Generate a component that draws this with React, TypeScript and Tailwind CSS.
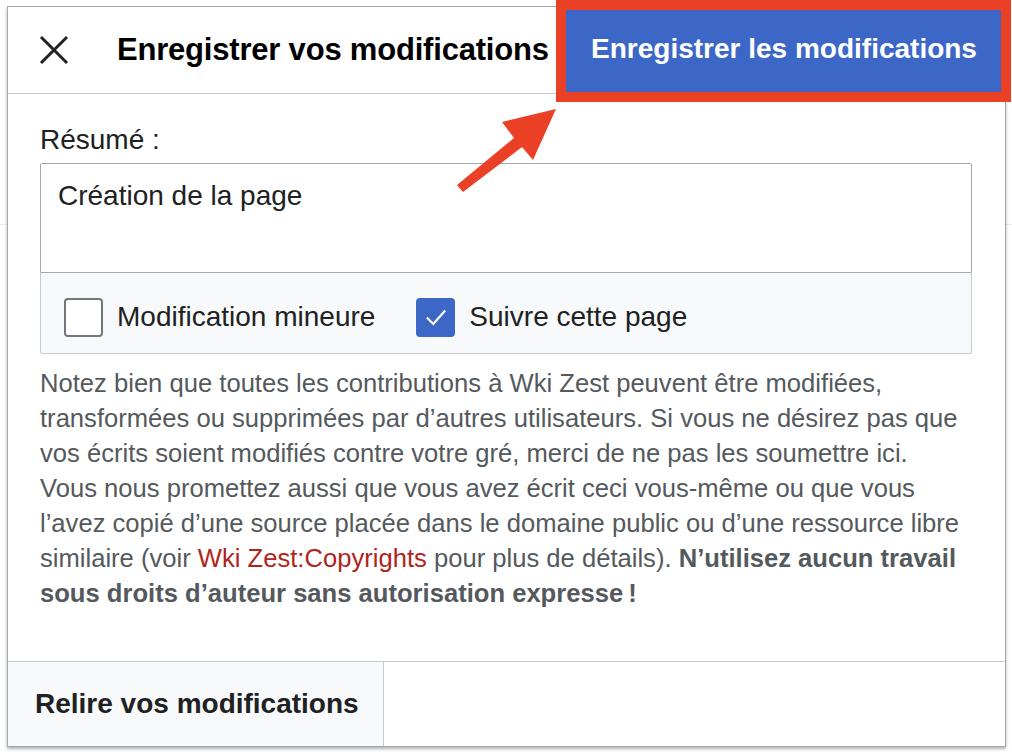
import React from "react";

export default function App() {
  return (
    <div
      className="relative w-[1012px] h-[754px] bg-white overflow-hidden"
      style={{ fontFamily: '"Liberation Sans", Arial, sans-serif' }}
    >
      {/* page behind the dialog */}
      <div className="pt-[224px]">
        <div className="h-px bg-[#e3ebf6]" />
      </div>

      {/* dialog */}
      <div className="absolute left-[7px] top-[6px] w-[999px] h-[741px] bg-white border border-[#a2a9b1] shadow-[0_2px_3px_0_rgba(0,0,0,0.3)] flex flex-col">
        {/* header */}
        <div className="h-[87px] flex items-stretch border-b border-[#c8ccd1] shrink-0">
          <button className="w-[92px] flex items-center justify-center text-[#202122]">
            <svg width="30" height="30" viewBox="0 0 30 30">
              <path d="M2 2 L28 28 M28 2 L2 28" stroke="#202122" strokeWidth="3" fill="none" />
            </svg>
          </button>
          <div className="flex items-center pl-[17px] text-[31px] font-bold text-black tracking-[-0.2px]">
            Enregistrer vos modifications
          </div>
          <div className="flex-1" />
          <button className="w-[442px] bg-[#3d67c6] text-white text-[28px] font-bold flex items-center justify-center pb-[2px]">
            Enregistrer les modifications
          </button>
        </div>

        {/* body */}
        <div className="flex-1 pl-[32px] pr-[33px] pt-[31px]">
          <div className="text-[28px] leading-[30px] text-[#202122]">Résumé :</div>
          <div className="mt-[8px] w-[932px]">
            <div className="h-[110px] border border-[#a2a9b1] rounded-t-[2px] px-[17px] pt-[14px] text-[28px] leading-[36px] text-[#202122]">
              Création de la page
            </div>
            <div className="h-[81px] bg-[#f8f9fa] border border-t-0 border-[#c8ccd1] rounded-b-[3px] flex items-center pl-[23px] pt-[8px]">
              <label className="flex items-center">
                <span className="w-[39px] h-[39px] rounded-[4px] border-2 border-[#72777d] bg-white" />
                <span className="ml-[14px] text-[28px] text-[#202122]">Modification mineure</span>
              </label>
              <label className="flex items-center ml-[41px]">
                <span className="w-[39px] h-[39px] rounded-[4px] bg-[#3d67c6] flex items-center justify-center">
                  <svg width="26" height="26" viewBox="0 0 24 24">
                    <path d="M3.5 12.5 L9.5 18.5 L20.5 6" stroke="white" strokeWidth="2" fill="none" />
                  </svg>
                </span>
                <span className="ml-[14px] text-[28px] text-[#202122]">Suivre cette page</span>
              </label>
            </div>
          </div>
          <p className="mt-[12px] text-[25.6px] leading-[35px] text-[#54595d] w-[960px] whitespace-nowrap">
            Notez bien que toutes les contributions à Wki Zest peuvent être modifiées,
            <br />
            transformées ou supprimées par d’autres utilisateurs. Si vous ne désirez pas que
            <br />
            vos écrits soient modifiés contre votre gré, merci de ne pas les soumettre ici.
            <br />
            Vous nous promettez aussi que vous avez écrit ceci vous-même ou que vous
            <br />
            l’avez copié d’une source placée dans le domaine public ou d’une ressource libre
            <br />
            similaire (voir <span className="text-[#b0241c]">Wki Zest:Copyrights</span> pour plus de
            détails). <b className="font-bold">N’utilisez aucun travail</b>
            <br />
            <b className="font-bold">sous droits d’auteur sans autorisation expresse&#8239;!</b>
          </p>
        </div>

        {/* footer */}
        <div className="h-[85px] border-t border-[#c8ccd1] flex shrink-0">
          <button className="w-[376px] bg-[#f8f9fa] border-r border-[#c8ccd1] text-left pl-[27px] text-[28px] font-bold text-[#202122]">
            Relire vos modifications
          </button>
          <div className="flex-1" />
        </div>
      </div>

      {/* annotation: red box */}
      <div className="absolute left-[556px] top-0 w-[455px] h-[102px] border-[10px] border-[#ea4026]" />

      {/* annotation: arrow */}
      <svg className="absolute left-0 top-0" width="1012" height="754" viewBox="0 0 1012 754">
        <polygon
          points="457,185 514,138 502,122 556,109 533,160 522,147 463,192"
          fill="#ea4026"
        />
      </svg>
    </div>
  );
}
